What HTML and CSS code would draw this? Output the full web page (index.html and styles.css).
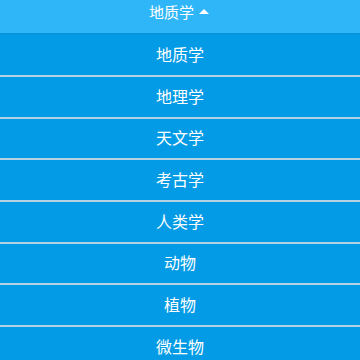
FILE: index.html
```html
<!DOCTYPE html>
<html lang="zh">
<head>
    <meta charset="UTF-8">
    <meta name="viewport" content="width=device-width, initial-scale=1.0">
    <title>学科选择</title>
    <link rel="stylesheet" href="styles.css">
</head>
<body>
    <div class="dropdown">
        <div class="dropdown-head">
            <span>地质学</span>
            <span class="arrow"></span>
        </div>
        <ul class="dropdown-list">
            <li>地质学</li>
            <li>地理学</li>
            <li>天文学</li>
            <li>考古学</li>
            <li>人类学</li>
            <li>动物</li>
            <li>植物</li>
            <li>微生物</li>
        </ul>
    </div>
</body>
</html>
```

FILE: styles.css
```css
body {
    margin: 0;
    padding: 0;
    background: #039be5;
    font-family: "Noto Sans CJK SC", "Noto Sans", sans-serif;
    color: white;
}
.dropdown-head {
    height: 35.33px;
    box-sizing: border-box;
    background: #2fb6f8;
    border-bottom: 2px solid #0795dc;
    display: flex;
    align-items: flex-start;
    justify-content: center;
    gap: 5px;
    font-size: 15px;
    line-height: 22px;
    padding-top: 1px;
    padding-right: 2px;
}
.arrow {
    width: 0;
    height: 0;
    border-left: 5px solid transparent;
    border-right: 5px solid transparent;
    border-bottom: 5px solid white;
    margin-top: 8px;
}
.dropdown-list {
    list-style: none;
    margin: 0;
    padding: 0;
}
.dropdown-list li {
    height: 41.67px;
    box-sizing: border-box;
    border-bottom: 2px solid #b3d1e0;
    padding-bottom: 2px;
    display: flex;
    align-items: center;
    justify-content: center;
    font-size: 16px;
    background: #039be5;
}
```
